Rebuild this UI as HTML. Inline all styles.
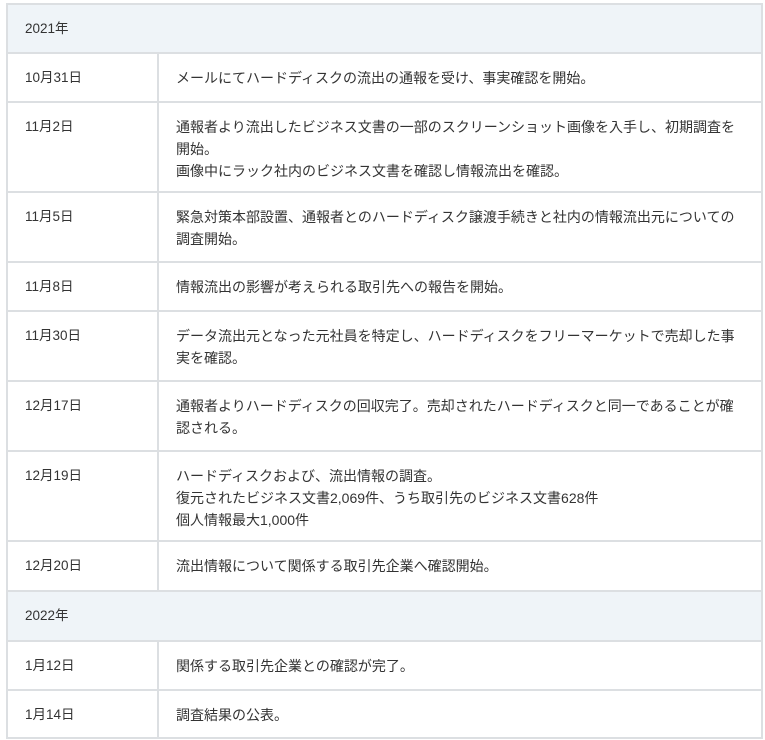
<!DOCTYPE html>
<html><head><meta charset="utf-8"><style>
html,body{margin:0;padding:0;background:#fff;width:765px;height:740px;overflow:hidden}
body{font-family:"Liberation Sans","Noto Sans CJK JP",sans-serif;font-size:14px;color:#333}
table{position:absolute;left:6px;top:3px;width:755px;border-collapse:collapse;table-layout:fixed}
td{border:2px solid #dcdfe2;vertical-align:top;padding:13px 20px 0 17px;line-height:22px;box-sizing:border-box}
td.d{font-size:13.5px}
tr.h td{background:#eff4f8;font-size:13.5px}
</style></head><body>
<table>
<colgroup><col style="width:151px"><col style="width:604px"></colgroup>
<tr class="h" style="height:49px"><td colspan="2">2021年</td></tr>
<tr style="height:49px"><td class="d">10月31日</td><td>メールにてハードディスクの流出の通報を受け、事実確認を開始。</td></tr>
<tr style="height:90px"><td class="d">11月2日</td><td>通報者より流出したビジネス文書の一部のスクリーンショット画像を入手し、初期調査を開始。<br>画像中にラック社内のビジネス文書を確認し情報流出を確認。</td></tr>
<tr style="height:70px"><td class="d">11月5日</td><td>緊急対策本部設置、通報者とのハードディスク譲渡手続きと社内の情報流出元についての調査開始。</td></tr>
<tr style="height:49px"><td class="d">11月8日</td><td>情報流出の影響が考えられる取引先への報告を開始。</td></tr>
<tr style="height:70px"><td class="d">11月30日</td><td>データ流出元となった元社員を特定し、ハードディスクをフリーマーケットで売却した事実を確認。</td></tr>
<tr style="height:70px"><td class="d">12月17日</td><td>通報者よりハードディスクの回収完了。売却されたハードディスクと同一であることが確認される。</td></tr>
<tr style="height:90px"><td class="d">12月19日</td><td>ハードディスクおよび、流出情報の調査。<br>復元されたビジネス文書2,069件、うち取引先のビジネス文書628件<br>個人情報最大1,000件</td></tr>
<tr style="height:50px"><td class="d">12月20日</td><td>流出情報について関係する取引先企業へ確認開始。</td></tr>
<tr class="h" style="height:50px"><td colspan="2">2022年</td></tr>
<tr style="height:49px"><td class="d">1月12日</td><td>関係する取引先企業との確認が完了。</td></tr>
<tr style="height:48px"><td class="d">1月14日</td><td>調査結果の公表。</td></tr>
</table>
</body></html>
